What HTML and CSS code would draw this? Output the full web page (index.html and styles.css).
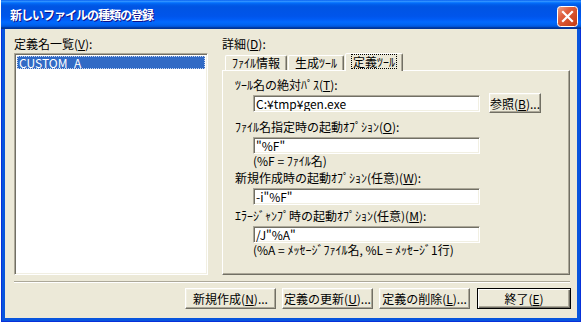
FILE: index.html
```html
<!DOCTYPE html>
<html lang="ja">
<head>
  <meta charset="UTF-8" />
  <title>新しいファイルの種類の登録</title>
  <link rel="stylesheet" href="styles.css">
</head>
<body>
  <div class="window">
    <div class="titlebar">
      <span class="title">新しいファイルの種類の登録</span>
      <span class="close">
        <svg width="21" height="21" viewBox="0 0 21 21">
          <defs>
            <linearGradient id="closeFill" x1="0" y1="0" x2="1" y2="1">
              <stop offset="0" stop-color="#F0A58A"/>
              <stop offset="0.35" stop-color="#E0603F"/>
              <stop offset="1" stop-color="#C1380F"/>
            </linearGradient>
          </defs>
          <rect x="0.5" y="0.5" width="20" height="20" rx="3" fill="url(#closeFill)" stroke="#FFFFFF"/>
          <path d="M6 6 L15 15 M15 6 L6 15" stroke="#FFFFFF" stroke-width="2.2" stroke-linecap="square"/>
        </svg>
      </span>
    </div>

    <div class="client">
      <div class="main">
        <div class="list-col">
          <div class="label">定義名一覧(<u>V</u>):</div>
          <div class="listbox">
            <div class="item selected">CUSTOM_A</div>
          </div>
        </div>

        <div class="detail-col">
          <div class="label">詳細(<u>D</u>):</div>
          <div class="tabs">
            <div class="tab">ﾌｧｲﾙ情報</div>
            <div class="tab">生成ﾂｰﾙ</div>
            <div class="tab active"><span class="focus">定義ﾂｰﾙ</span></div>
          </div>
          <div class="panel">
            <div class="group first">
              <div class="label">ﾂｰﾙ名の絶対ﾊﾟｽ(<u>T</u>):</div>
              <div class="row">
                <input class="edit" type="text" value="C:¥tmp¥gen.exe">
                <button class="btn browse">参照(<u>B</u>)...</button>
              </div>
            </div>
            <div class="group">
              <div class="label">ﾌｧｲﾙ名指定時の起動ｵﾌﾟｼｮﾝ(<u>O</u>):</div>
              <input class="edit" type="text" value='"%F"'>
              <div class="hint">(%F = ﾌｧｲﾙ名)</div>
            </div>
            <div class="group">
              <div class="label">新規作成時の起動ｵﾌﾟｼｮﾝ(任意)(<u>W</u>):</div>
              <input class="edit" type="text" value='-i"%F"'>
            </div>
            <div class="group">
              <div class="label">ｴﾗｰｼﾞｬﾝﾌﾟ時の起動ｵﾌﾟｼｮﾝ(任意)(<u>M</u>):</div>
              <input class="edit" type="text" value='/J"%A"'>
              <div class="hint">(%A = ﾒｯｾｰｼﾞﾌｧｲﾙ名, %L = ﾒｯｾｰｼﾞ1行)</div>
            </div>
          </div>
        </div>
      </div>

      <div class="separator"></div>

      <div class="actions">
        <button class="btn">新規作成(<u>N</u>)...</button>
        <button class="btn">定義の更新(<u>U</u>)...</button>
        <button class="btn">定義の削除(<u>L</u>)...</button>
        <button class="btn default">終了(<u>E</u>)</button>
      </div>
    </div>
  </div>
</body>
</html>
```

FILE: styles.css
```css
* {
  box-sizing: border-box;
}
body {
  margin: 0;
  background: #fff;
  font-family: "Noto Sans CJK JP", "Noto Sans", sans-serif;
  font-size: 12px;
  color: #000;
}
.window {
  width: 580px;
  height: 322px;
  margin-left: 1px;
  display: flex;
  flex-direction: column;
  background: #0855DD;
  box-shadow: inset 0 0 0 1px #0831D9;
}

/* title bar */
.titlebar {
  height: 29px;
  flex: none;
  display: flex;
  align-items: center;
  justify-content: space-between;
  padding: 0 3px 0 9px;
  background: linear-gradient(to bottom, #0058EE 0%, #3593FF 4%, #288EFF 6%, #127DFF 8%, #036FFC 10%, #0262EE 14%, #0057E5 20%, #0054E3 24%, #0055EB 56%, #005BF5 66%, #026AFE 76%, #0062EF 86%, #0052D6 92%, #0040AB 94%, #003092 100%);
}
.title {
  color: #fff;
  font-weight: bold;
  letter-spacing: -1px;
  line-height: 14px;
  text-shadow: 1px 1px #0F1089;
}
.close {
  width: 21px;
  height: 21px;
  margin-top: 3px;
}
.close svg {
  display: block;
}

/* client area */
.client {
  flex: 1;
  margin: 0 4px 4px;
  background: #ECE9D8;
  padding: 9px 7px 0 9px;
  display: flex;
  flex-direction: column;
}
.main {
  display: flex;
  gap: 14px;
  height: 237px;
}
.label {
  height: 12px;
  line-height: 12px;
  white-space: nowrap;
}
u {
  text-decoration-thickness: 1px;
  text-underline-offset: 1px;
}

.list-col {
  width: 194px;
}
.listbox {
  margin-top: 3px;
  height: 222px;
  background: #fff;
  border: 1px solid;
  border-color: #ACA899 #fff #fff #ACA899;
  box-shadow: inset 1px 1px #716F64, inset -1px -1px #F1EFE2;
  padding: 2px;
}
.item {
  height: 13px;
  line-height: 13px;
  padding-left: 2px;
}
.item.selected {
  background: #316AC5;
  color: #fff;
  outline: 1px dotted #C9D6EE;
  outline-offset: -1px;
}

.detail-col {
  width: 348px;
}
.tabs {
  margin-top: 3px;
  height: 17px;
  display: flex;
  align-items: flex-end;
  gap: 1px;
  padding-left: 3px;
}
.tab {
  height: 15px;
  line-height: 14px;
  padding: 0 6px;
  border: 1px solid;
  border-bottom: none;
  border-color: #fff #716F64 transparent #fff;
  border-radius: 2px 2px 0 0;
  box-shadow: inset -1px 0 #ACA899;
  white-space: nowrap;
}
.tab.active {
  height: 18px;
  line-height: 15px;
  padding: 0 7px;
  margin-bottom: -1px;
  background: #ECE9D8;
  position: relative;
  z-index: 1;
}
.focus {
  display: inline-block;
  line-height: 13px;
  padding: 0 1px;
  margin: 0 -1px;
  outline: 1px dotted #000;
}
.panel {
  height: 205px;
  border: 1px solid;
  border-color: #fff #716F64 #716F64 #fff;
  box-shadow: inset -1px -1px #ACA899;
  padding: 8px 0 0 12px;
}
.group {
  display: flex;
  flex-direction: column;
  margin-top: 5px;
}
.group.first {
  margin-top: 0;
  margin-bottom: 8px;
}
.row {
  margin-top: 2px;
  height: 20px;
  display: flex;
  align-items: center;
}
.edit {
  width: 227px;
  height: 17px;
  margin: 4px 0 0 18px;
  padding: 0 2px;
  font: 12px "Noto Sans CJK JP", sans-serif;
  color: #000;
  background: #fff;
  border: 1px solid;
  border-color: #ACA899 #fff #fff #ACA899;
  box-shadow: inset 1px 1px #716F64, inset -1px -1px #F1EFE2;
  outline: none;
}
.row .edit {
  margin-top: 0;
}
.hint {
  margin: 1px 0 0 18px;
  height: 12px;
  line-height: 12px;
  white-space: nowrap;
}

/* buttons */
.btn {
  width: 91px;
  height: 21px;
  padding: 0;
  font: 12px "Noto Sans CJK JP", sans-serif;
  line-height: 17px;
  color: #000;
  background: #ECE9D8;
  border: 1px solid;
  border-color: #fff #716F64 #716F64 #fff;
  box-shadow: inset -1px -1px #ACA899, inset 1px 1px #F1EFE2;
  white-space: nowrap;
}
.btn.browse {
  width: 52px;
  height: 20px;
  margin-left: 9px;
}
.btn.default {
  width: 94px;
  margin-left: 1px;
  border: 1px solid #000;
  box-shadow: inset 1px 1px #fff, inset -1px -1px #716F64, inset -2px -2px #ACA899;
}

.separator {
  margin-top: 6px;
  height: 2px;
  border-top: 1px solid #ACA899;
  border-bottom: 1px solid #fff;
}
.actions {
  margin: 5px -1px 0 0;
  display: flex;
  justify-content: flex-end;
  gap: 6px;
}
```
